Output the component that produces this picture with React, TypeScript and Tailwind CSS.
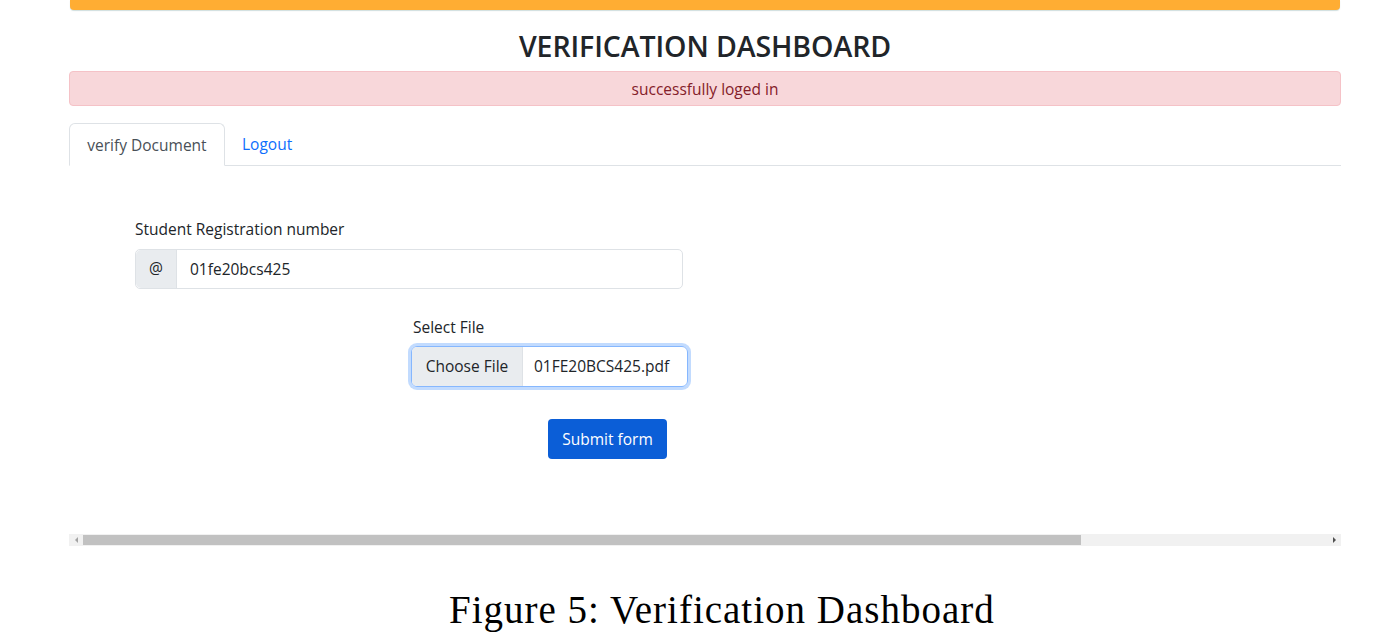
const ui = { fontFamily: '"Open Sans", "Noto Sans", sans-serif' };

function Scrollbar() {
  return (
    <div className="flex h-[12px] w-full items-center bg-[#f1f1f1]">
      <div className="flex h-full w-[14px] items-center justify-center">
        <div className="h-0 w-0 border-y-[3px] border-r-[3px] border-y-transparent border-r-[#a3a3a3]" />
      </div>
      <div className="h-[10px] w-[998px] bg-[#c1c1c1]" />
      <div className="flex-1" />
      <div className="flex h-full w-[14px] items-center justify-center">
        <div className="h-0 w-0 border-y-[3px] border-l-[3px] border-y-transparent border-l-[#505050]" />
      </div>
    </div>
  );
}

export default function App() {
  return (
    <div className="h-[632px] w-[1385px] overflow-hidden bg-white text-[#212529]" style={ui}>
      <div className="ml-[69px] w-[1272px]">
        <div className="mx-px h-[10px] rounded-b-[4px] bg-[#ffad33] shadow-[0_1px_1px_rgba(120,160,160,0.35)]" />

        <h2 className="mt-[19px] text-center text-[28.5px] leading-[34px] font-semibold tracking-[-0.1px]">
          VERIFICATION DASHBOARD
        </h2>

        <div className="mt-[8px] flex h-[35px] items-center justify-center rounded-[4px] border border-[#f5c2c7] bg-[#f8d7da] pt-[2px] text-[15.5px] text-[#842029]">
          successfully loged in
        </div>

        <div className="mt-[17px] flex border-b border-[#dee2e6]">
          <div className="-mb-px flex h-[43px] w-[156px] items-center justify-center rounded-t-[6px] border border-[#dee2e6] border-b-white bg-white pt-[2px] text-[15.5px] text-[#495057]">
            verify Document
          </div>
          <div className="flex h-[42px] items-center px-[17px] pt-[2px] text-[15.5px] text-[#0d6efd]">Logout</div>
        </div>

        <div className="ml-[66px] pt-[51px]">
          <div className="text-[15.5px] leading-[24px]">Student Registration number</div>
          <div className="mt-[8px] flex h-[40px] w-[548px] rounded-[5px] border border-[#dee2e6] text-[15.5px]">
            <div className="flex w-[41px] items-center justify-center rounded-l-[5px] border-r border-[#dee2e6] bg-[#e9ecef] text-[#212529]">
              @
            </div>
            <div className="flex items-center pl-[13px] pt-px">01fe20bcs425</div>
          </div>

          <div className="ml-[278px] mt-[26px] text-[15.5px] leading-[24px]">Select File</div>
          <div className="ml-[276px] mt-[7px] flex h-[41px] w-[277px] rounded-[6px] border border-[#86b7fe] text-[15.5px] shadow-[0_0_0_3px_rgba(13,110,253,0.25)]">
            <div className="flex w-[111px] items-center justify-center rounded-l-[5px] border-r border-[#dee2e6] bg-[#e9ecef] pt-px text-[#212529]">
              Choose File
            </div>
            <div className="flex flex-1 items-center pl-[11px] pt-px">01FE20BCS425.pdf</div>
          </div>

          <button className="ml-[413px] mt-[32px] flex h-[40px] w-[119px] items-center justify-center rounded-[4px] bg-[#0b5ed7] pt-px text-[15.5px] text-white">
            Submit form
          </button>
        </div>

        <div className="mt-[75px]">
          <Scrollbar />
        </div>
      </div>

      <div
        className="mt-[42px] pl-[449px] text-[39px] leading-[44px] tracking-[1px] text-black"
        style={{ fontFamily: '"Liberation Serif", "DejaVu Serif", serif' }}
      >
        Figure 5: Verification Dashboard
      </div>
    </div>
  );
}
